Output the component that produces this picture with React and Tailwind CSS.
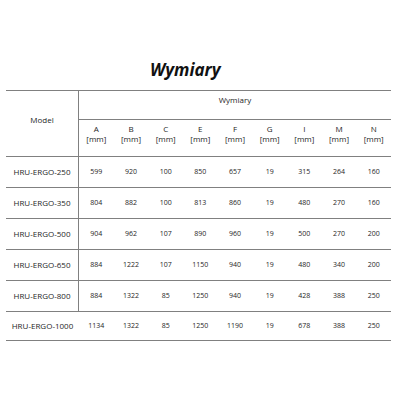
import React from "react";

const cols = ["A", "B", "C", "E", "F", "G", "I", "M", "N"];
const rows = [
  ["HRU-ERGO-250", "599", "920", "100", "850", "657", "19", "315", "264", "160"],
  ["HRU-ERGO-350", "804", "882", "100", "813", "860", "19", "480", "270", "160"],
  ["HRU-ERGO-500", "904", "962", "107", "890", "960", "19", "500", "270", "200"],
  ["HRU-ERGO-650", "884", "1222", "107", "1150", "940", "19", "480", "340", "200"],
  ["HRU-ERGO-800", "884", "1322", "85", "1250", "940", "19", "428", "388", "250"],
  ["HRU-ERGO-1000", "1134", "1322", "85", "1250", "1190", "19", "678", "388", "250"],
];

export default function App() {
  return (
    <div
      className="w-[400px] h-[400px] bg-white text-[#262626]"
      style={{ fontFamily: '"Open Sans", "DejaVu Sans", sans-serif' }}
    >
      <div className="pt-[58px] pl-[150px] h-[90px]">
        <div className="text-[17px] leading-[24px] font-bold italic text-[#111]">Wymiary</div>
      </div>
      <div className="ml-[6px] w-[385px] grid grid-cols-[73px_repeat(9,1fr)] border-t border-[#808080]">
        <div className="row-span-2 flex items-center justify-center text-[8px] border-r border-b border-[#808080] pb-[8px]">
          Model
        </div>
        <div className="col-span-9 h-[29px] border-b border-[#808080] flex justify-center pt-[3px] text-[8px] leading-[12px]">
          Wymiary
        </div>
        {cols.map((c) => (
          <div
            key={c}
            className="h-[37px] border-b border-[#808080] flex flex-col items-center pt-[4px] text-[8px] leading-[10px]"
          >
            <span>{c}</span>
            <span>[mm]</span>
          </div>
        ))}
        {rows.map((r, i) => {
          const last = i === rows.length - 1;
          return (
            <React.Fragment key={r[0]}>
              <div
                className={
                  (last ? "h-[29px] " : "h-[31px] border-r ") +
                  "border-b border-[#808080] flex items-center justify-center text-[8px]"
                }
              >
                {r[0]}
              </div>
              {r.slice(1).map((v, j) => (
                <div
                  key={j}
                  className={
                    (last ? "h-[29px] " : "h-[31px] ") +
                    "border-b border-[#808080] flex items-center justify-center text-[7px]"
                  }
                >
                  {v}
                </div>
              ))}
            </React.Fragment>
          );
        })}
      </div>
    </div>
  );
}
